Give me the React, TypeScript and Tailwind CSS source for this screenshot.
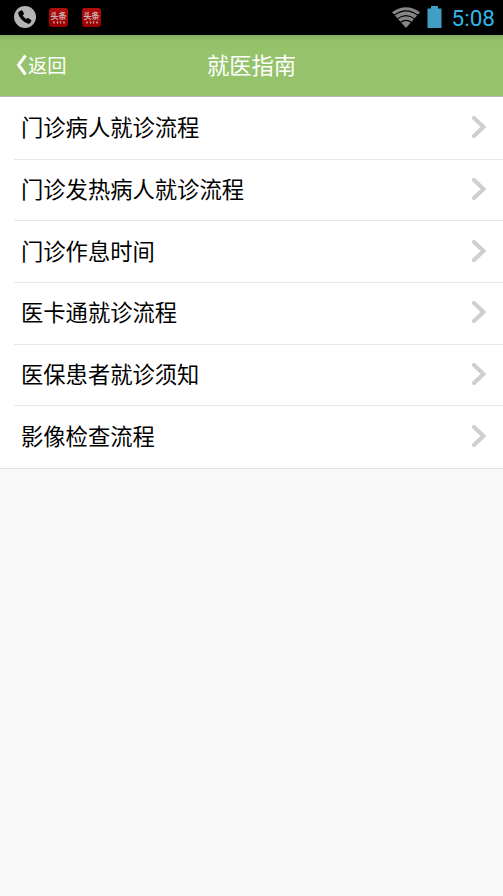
const guides: string[] = [
  "门诊病人就诊流程",
  "门诊发热病人就诊流程",
  "门诊作息时间",
  "医卡通就诊流程",
  "医保患者就诊须知",
  "影像检查流程",
];

function PhoneIcon() {
  return (
    <svg width="22" height="22" viewBox="0 0 22 22">
      <circle cx="11" cy="11" r="11" fill="#b4b4b4" />
      <path
        d="M4.9 5.8 L7.2 4.3 Q8.1 4 8.5 4.8 L9.9 7.3 Q10.2 8 9.6 8.5 L8.6 9.3 Q9.8 11.6 12.2 13.1 L13.2 12.3 Q13.8 11.9 14.5 12.3 L17 13.9 Q17.7 14.4 17.3 15.2 L16.1 17.1 Q15.5 17.9 14.2 17.7 Q10.8 17.1 7.5 13.6 Q4.4 10.1 4.2 7.3 Q4.2 6.2 4.9 5.8Z"
        fill="#000"
      />
    </svg>
  );
}

function NewsIcon() {
  return (
    <div className="flex h-[19px] w-[19px] flex-col items-center overflow-hidden rounded-[3px] bg-linear-to-b from-[#b00d0d] to-[#980000] pt-[4px]">
      <span className="text-[8px] leading-[8px] font-bold whitespace-nowrap text-[#c9b3b3]">
        头条
      </span>
      <svg width="12" height="3" viewBox="0 0 12 3" className="mt-px">
        <path
          d="M0 1.5h2M1 0v3M3.5 1.5h2M4.5 0v3M6.7 1h2M7.5 0v3M10 1.5h2M11 0v3"
          stroke="#c58a8a"
          strokeWidth="0.9"
        />
      </svg>
    </div>
  );
}

function WifiIcon() {
  return (
    <svg width="28" height="21" viewBox="0 0 28 21">
      <path d="M0 5.3 Q14 -4.9 28 5.3 L14 21Z" fill="#858585" />
      <g fill="none" stroke="#000" strokeWidth="1.1">
        <path d="M1.8 8.5 Q14 -0.8 26.2 8.5" />
        <path d="M5 12.1 Q14 5.1 23 12.1" />
        <path d="M8.2 15.7 Q14 11.1 19.8 15.7" />
      </g>
    </svg>
  );
}

function BatteryIcon() {
  return (
    <svg width="15" height="22" viewBox="0 0 15 22">
      <path d="M4 0h7v2.5h3.5V22H.5V2.5H4Z" fill="#419fc6" />
    </svg>
  );
}

function StatusBar() {
  return (
    <div className="flex h-[35px] items-center justify-between bg-black pr-[8px] pb-px pl-[14px]">
      <div className="flex items-center">
        <PhoneIcon />
        <div className="ml-[13px] flex gap-[14px]">
          <NewsIcon />
          <NewsIcon />
        </div>
      </div>
      <div className="flex items-center">
        <WifiIcon />
        <div className="ml-[7px]">
          <BatteryIcon />
        </div>
        <span className="ml-[10px] pt-[2px] font-[Roboto] text-[22.5px] leading-none text-[#33b5e5]">
          5:08
        </span>
      </div>
    </div>
  );
}

function Header() {
  return (
    <header className="grid h-[62px] grid-cols-[1fr_auto_1fr] items-center border-b border-[#b9b9b9] bg-linear-to-b from-[#86b060] via-[#95c26a] via-10% to-[#95c26a] text-white">
      <button className="flex items-center pl-[15px] text-[19.3px] leading-none">
        <svg width="13" height="22" viewBox="0 0 13 22" className="mb-[2px] shrink-0">
          <path d="M10.5 1.5 L3.5 11 L10.5 20.5" fill="none" stroke="#fff" strokeWidth="3" />
        </svg>
        <span className="pt-px">返回</span>
      </button>
      <h1 className="pb-[2px] text-[22.3px] leading-none">就医指南</h1>
    </header>
  );
}

export default function App() {
  return (
    <div className="min-h-screen bg-[#f8f8f8] font-['Noto_Sans_CJK_SC',sans-serif]">
      <StatusBar />
      <Header />
      <ul className="divide-y divide-[#e6e6e6] border-b border-[#e2e2e2] bg-white bg-clip-padding pt-px pl-[14px]">
        {guides.map((title) => (
          <li
            key={title}
            className="flex h-[61.7px] items-center justify-between pr-[17px] pb-[2px] pl-[7px] text-[22.3px] leading-none text-black"
          >
            <span className="pb-[2px]">{title}</span>
            <svg width="14" height="22" viewBox="0 0 14 22">
              <path
                d="M2 2 L11.5 11 L2 20"
                fill="none"
                stroke="#cfcfcf"
                strokeWidth="4"
                strokeLinecap="round"
              />
            </svg>
          </li>
        ))}
      </ul>
    </div>
  );
}
